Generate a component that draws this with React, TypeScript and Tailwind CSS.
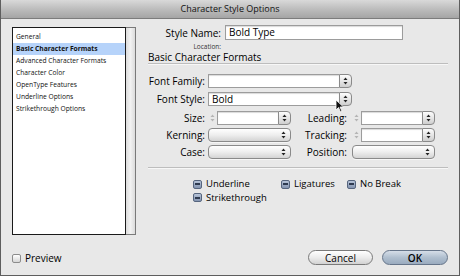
import React from "react";

const font = { fontFamily: '"Open Sans", "Liberation Sans", sans-serif' };

function Arrows({ color = "#222" }: { color?: string }) {
  return (
    <svg width="5" height="8" viewBox="0 0 5 8">
      <path d="M2.5 0.5 L4.5 3 L0.5 3 Z" fill={color} />
      <path d="M2.5 7.5 L4.5 5 L0.5 5 Z" fill={color} />
    </svg>
  );
}

function StepButton() {
  return (
    <div className="w-[13px] h-full flex items-center justify-center rounded-r-[4px] border border-[#8a8a8a] bg-gradient-to-b from-[#fdfdfd] via-[#e6e6e6] to-[#cfcfcf]">
      <Arrows />
    </div>
  );
}

function ComboField({ value = "", width }: { value?: string; width: string }) {
  return (
    <div className={`flex h-[14px] ${width}`}>
      <div className="flex-1 bg-white border border-[#9c9c9c] border-r-0 shadow-[inset_0_1px_1px_rgba(0,0,0,0.15)] text-[10px] leading-[12px] pl-[3px] text-black">
        {value}
      </div>
      <StepButton />
    </div>
  );
}

function NumField() {
  return (
    <div className="flex h-[14px] w-[83px]">
      <div className="w-[9px] h-full flex items-center justify-center">
        <Arrows color="#b4b4b4" />
      </div>
      <div className="flex-1 bg-white border border-[#9c9c9c] border-r-0 shadow-[inset_0_1px_1px_rgba(0,0,0,0.15)]" />
      <StepButton />
    </div>
  );
}

function Popup() {
  return (
    <div className="h-[14px] w-[83px] rounded-[4px] border border-[#8a8a8a] bg-gradient-to-b from-[#ffffff] via-[#eeeeee] to-[#d4d4d4] flex items-center justify-end pr-[4px] shadow-[0_1px_0_rgba(255,255,255,0.6)]">
      <Arrows />
    </div>
  );
}

function Mixed({ label, className = "" }: { label: string; className?: string }) {
  return (
    <div className={`flex items-center gap-[4px] ${className}`}>
      <div className="w-[9px] h-[9px] rounded-[2px] border border-[#56657e] bg-gradient-to-b from-[#b7c4d8] to-[#8494b0] flex items-center justify-center">
        <div className="w-[5px] h-[2px] bg-[#2e3a50]" />
      </div>
      <div className="h-[12px] text-[9.5px] leading-[12px] text-black">{label}</div>
    </div>
  );
}

function Separator() {
  return (
    <div className="h-[2px] w-full flex flex-col">
      <div className="h-[1px] bg-[#bdbdbd]" />
      <div className="h-[1px] bg-[#f7f7f7]" />
    </div>
  );
}

export default function App() {
  const items = [
    "General",
    "Basic Character Formats",
    "Advanced Character Formats",
    "Character Color",
    "OpenType Features",
    "Underline Options",
    "Strikethrough Options",
  ];
  return (
    <div
      style={font}
      className="relative w-[460px] h-[276px] bg-[#e8e8e8] border-x border-b border-[#5e5e5e] flex flex-col text-black overflow-hidden"
    >
      <div className="h-[19px] shrink-0 bg-gradient-to-b from-[#d9d9d9] via-[#bdbdbd] to-[#a5a5a5] border-b border-[#7c7c7c] flex items-center justify-center">
        <div className="text-[9px] leading-[12px] text-[#111]">Character Style Options</div>
      </div>
      <div className="flex flex-1">
        {/* left */}
        <div className="w-[147px] shrink-0 pl-[11px] pt-[8px] flex flex-col">
          <div className="flex h-[208px] w-[124px]">
            <div className="w-[114px] h-full bg-white border-[1.5px] border-[#1a1a1a] pt-[3px] flex flex-col">
              {items.map((t, i) => (
                <div
                  key={t}
                  className={`h-[12px] pl-[3px] text-[6.7px] leading-[12px] text-[#111] ${
                    i === 1 ? "bg-[#b6d3fa] font-bold" : ""
                  }`}
                >
                  {t}
                </div>
              ))}
            </div>
            <div className="flex-1 h-full bg-gradient-to-r from-[#dcdcdc] via-[#f2f2f2] to-[#dcdcdc] border-y border-r border-[#7a7a7a]" />
          </div>
          <div className="mt-[17px] flex items-center gap-[4px]">
            <div className="w-[9px] h-[9px] rounded-[2px] border border-[#8c8c8c] bg-gradient-to-b from-[#ffffff] to-[#d6d6d6]" />
            <div className="h-[12px] text-[10px] leading-[12px]">Preview</div>
          </div>
        </div>

        {/* right */}
        <div className="flex-1 flex flex-col pr-[11px] pb-[10px]">
          <div className="mt-[6px] flex items-center h-[15px]">
            <div className="w-[73px] text-right text-[10px] leading-[12px]">Style Name:</div>
            <div className="ml-[4px] w-[178px] h-[15px] bg-white border border-[#9c9c9c] shadow-[inset_0_1px_1px_rgba(0,0,0,0.15)] text-[10px] leading-[13px] pl-[3px]">
              Bold Type
            </div>
          </div>
          <div className="mt-[3px] w-[73px] text-right text-[6.5px] leading-[8px] text-[#333]">Location:</div>
          <div className="h-[12px] text-[10px] leading-[12px] text-black">Basic Character Formats</div>
          <Separator />

          <div className="mt-[9px] flex items-center h-[14px]">
            <div className="w-[57px] text-right text-[10px] leading-[12px]">Font Family:</div>
            <div className="ml-[3px]">
              <ComboField width="w-[144px]" />
            </div>
          </div>
          <div className="mt-[4px] flex items-center h-[14px]">
            <div className="w-[57px] text-right text-[10px] leading-[12px]">Font Style:</div>
            <div className="ml-[3px]">
              <ComboField width="w-[144px]" value="Bold" />
            </div>
          </div>

          {[
            ["Size:", "num", "Leading:", "num"],
            ["Kerning:", "pop", "Tracking:", "num"],
            ["Case:", "pop", "Position:", "pop"],
          ].map(([l1, t1, l2, t2], i) => (
            <div key={l1} className={`${i === 0 ? "mt-[5px]" : "mt-[3px]"} flex items-center h-[14px]`}>
              <div className="w-[57px] text-right text-[10px] leading-[12px]">{l1}</div>
              <div className="ml-[3px]">{t1 === "num" ? <NumField /> : <Popup />}</div>
              <div className="w-[56px] text-right text-[10px] leading-[12px]">{l2}</div>
              <div className="ml-[5px]">{t2 === "num" ? <NumField /> : <Popup />}</div>
            </div>
          ))}

          <div className="mt-[8px]">
            <Separator />
          </div>

          <div className="mt-[9px] flex items-center h-[12px] pl-[45px]">
            <Mixed label="Underline" className="w-[88px]" />
            <Mixed label="Ligatures" className="w-[66px]" />
            <Mixed label="No Break" />
          </div>
          <div className="mt-[1px] flex items-center h-[13px] pl-[45px]">
            <Mixed label="Strikethrough" />
          </div>

          <div className="mt-auto flex justify-end gap-[9px]">
            <div className="w-[65px] h-[15px] rounded-full border border-[#7a7a7a] bg-gradient-to-b from-[#ffffff] via-[#ececec] to-[#d2d2d2] flex items-center justify-center text-[10px] leading-[12px]">
              Cancel
            </div>
            <div className="w-[66px] h-[15px] rounded-full border border-[#66758a] bg-gradient-to-b from-[#d6dee8] via-[#b0bfcf] to-[#9aabbf] flex items-center justify-center text-[10px] leading-[12px] font-semibold">
              OK
            </div>
          </div>
        </div>
      </div>

      {/* mouse cursor overlay */}
      <svg className="absolute left-[334px] top-[99px]" width="10" height="14" viewBox="0 0 10 14">
        <path d="M1 1 L1 11 L3.5 8.5 L5.5 13 L7 12.3 L5 8 L8.5 8 Z" fill="#111" stroke="#fff" strokeWidth="0.8" />
      </svg>
    </div>
  );
}
